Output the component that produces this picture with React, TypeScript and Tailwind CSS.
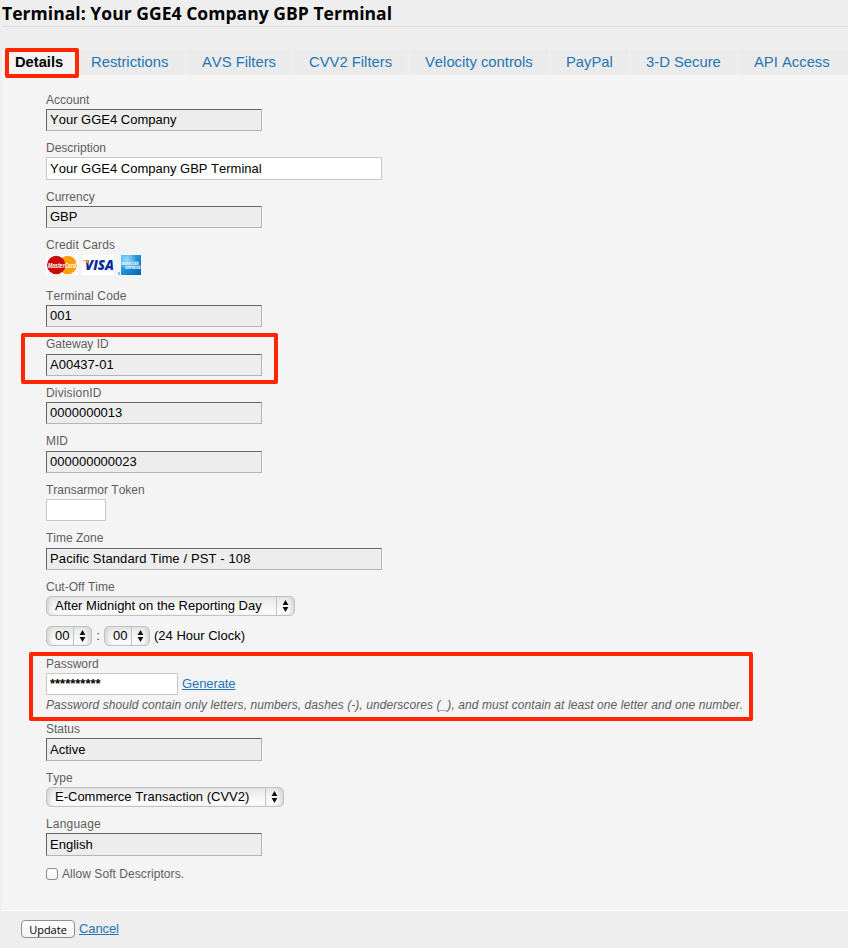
import type { ReactNode } from 'react';

const tabs = [
  { label: 'Restrictions', box: 'w-[104px] pl-[11px]' },
  { label: 'AVS Filters', box: 'w-[104px] pl-[15px]' },
  { label: 'CVV2 Filters', box: 'w-[113px] pl-[15px]' },
  { label: 'Velocity controls', box: 'w-[138px] pl-[15px]' },
  { label: 'PayPal', box: 'w-[77px] pl-[15px]' },
  { label: '3-D Secure', box: 'w-[105px] pl-[15px]' },
  { label: 'API Access', box: 'w-[109px] pl-[15px]' },
];

function Highlight({ className }: { className: string }) {
  return (
    <div
      className={`pointer-events-none absolute rounded-[2px] border-4 border-[#ff2600] ${className}`}
    />
  );
}

function Field({ label, box, gap = 'pb-px', children }: { label: string; box: string; gap?: string; children?: ReactNode }) {
  return (
    <div className={`relative ${box}`}>
      <div className={`text-[12px] leading-4 text-[#5e5e5e] ${gap}`}>{label}</div>
      {children}
    </div>
  );
}

function ReadOnly({ value, box = 'h-[22px] w-[216px]' }: { value: string; box?: string }) {
  return (
    <div
      className={`flex items-center border border-t-[#666] border-r-[#b5b5b5] border-b-[#b5b5b5] border-l-[#666] bg-[#ededed] pl-[3px] ${box}`}
    >
      {value}
    </div>
  );
}

function Input({ value, box }: { value: string; box: string }) {
  return <div className={`flex items-center border border-[#c8c8c8] bg-white pl-[3px] ${box}`}>{value}</div>;
}

function Select({ value, box }: { value: string; box: string }) {
  return (
    <div
      className={`flex h-5 rounded-[5px] border border-[#c3c3c3] bg-linear-to-b from-[#e6e6e6] via-[#f4f4f4] to-white shadow-[inset_4px_0_4px_-2px_#cfcfcf,inset_-4px_0_4px_-2px_#cfcfcf] ${box}`}
    >
      <div className="flex flex-1 items-center pl-2 leading-[18px]">{value}</div>
      <div className="flex w-[18px] items-center justify-center border-l border-[#c3c3c3]">
        <svg width="7" height="12" viewBox="0 0 7 12">
          <path d="M3.5 0 6.4 5H.6zM3.5 12 6.4 7H.6z" fill="#111" />
        </svg>
      </div>
    </div>
  );
}

function Cards() {
  return (
    <div className="flex gap-1">
      <svg className="overflow-visible" width="32" height="20" viewBox="0 0 32 20">
        <path fill="#fff" d="M0 0h32v20H0z" />
        <circle cx="21.7" cy="10" r="9.200" fill="#ff9d0a" />
        <circle cx="10.200" cy="10" r="9.200" fill="#cc0a05" />
        <text x="2" y="12.6" textLength="28" lengthAdjust="spacingAndGlyphs" fill="#fff" fontFamily="Liberation Sans, sans-serif" fontSize="6.8" fontWeight="700" fontStyle="italic">
          MasterCard
        </text>
      </svg>
      <svg className="overflow-visible" width="32" height="20" viewBox="0 0 32 20">
        <path fill="#fff" d="M0 0h32v20H0z" />
        <text x="3" y="15" textLength="29" lengthAdjust="spacingAndGlyphs" fill="#0b2aa0" fontFamily="Open Sans, sans-serif" fontSize="14" fontWeight="800" fontStyle="italic">
          VISA
        </text>
        <path d="M.8 5h4.700l1.800 5.500C6 8 4 6.300 .8 5.500z" fill="#f7a61b" />
      </svg>
      <svg className="overflow-visible" width="23" height="20" viewBox="0 0 23 20">
        <defs>
          <linearGradient id="amex" x1="0" y1="0" x2="1" y2="1">
            <stop offset="0" stopColor="#3fb0ea" />
            <stop offset=".45" stopColor="#2394d6" />
            <stop offset="1" stopColor="#0062b4" />
          </linearGradient>
          <radialGradient id="shine" cx=".3" cy=".25" r=".5">
            <stop offset="0" stopColor="#9adcfb" />
            <stop offset="1" stopColor="#9adcfb" stopOpacity="0" />
          </radialGradient>
        </defs>
        <path fill="url(#amex)" d="M3 0h20v20H3z" />
        <path fill="url(#shine)" d="M3 0h20v20H3z" />
        <path fill="#7fc4ee" d="M0 17h2v3H0z" />
        <path fill="#8ccaf0" opacity=".55" d="M3 6h18v4H3zM7 10h16v4H7z" />
        <g fill="#fff" fillOpacity=".85" fontFamily="Liberation Sans, sans-serif" fontSize="4.300" fontWeight="700">
          <text x="3.500" y="9.700" textLength="17" lengthAdjust="spacingAndGlyphs">AMERICAN</text>
          <text x="7.500" y="13.500" textLength="14.500" lengthAdjust="spacingAndGlyphs">EXPRESS</text>
        </g>
      </svg>
    </div>
  );
}

export default function App() {
  return (
    <div className="flex h-[948px] w-[848px] flex-col bg-[#eee] pl-[2px] font-['Liberation_Sans',Arial,sans-serif] text-[13px] text-black [font-kerning:none]">
      <h1 className="h-[27px] shrink-0 border-b border-[#dcdcdc] font-['Open_Sans','Noto_Sans',sans-serif] text-[17.5px] leading-[26px] font-bold tracking-[0.04px] whitespace-nowrap [font-kerning:normal]">
        Terminal: Your GGE4 Company GBP Terminal
      </h1>

      <nav className="mt-[23px] flex h-[25px] shrink-0 gap-[3px] text-[14.8px] leading-6 whitespace-nowrap text-[#2376b5]">
        <div className="relative w-[75px] bg-[#f4f4f4] pl-[13px] text-[14.7px] font-bold text-black">
          Details
          <Highlight className="-top-[2px] left-[3px] h-[30px] w-[74px]" />
        </div>
        {tabs.map((t) => (
          <div key={t.label} className={`h-6 shrink-0 bg-[#ebebeb] ${t.box}`}>
            {t.label}
          </div>
        ))}
      </nav>

      <main className="flex h-[836px] shrink-0 flex-col border-b border-white bg-[#f4f4f4] pt-[17px] pl-[44px]">
        <Field label="Account" box="h-[48px]">
          <ReadOnly value="Your GGE4 Company" />
        </Field>
        <Field label="Description" box="h-[49px]">
          <Input value="Your GGE4 Company GBP Terminal" box="h-[23px] w-[336px]" />
        </Field>
        <Field label="Currency" box="h-[48px]">
          <ReadOnly value="GBP" />
        </Field>
        <Field label="Credit Cards" box="h-[51px]" gap="pb-[2px] tracking-[0.15px]">
          <Cards />
        </Field>
        <Field label="Terminal Code" box="h-[48px]" gap="pb-px tracking-[0.15px]">
          <ReadOnly value="001" />
        </Field>
        <Field label="Gateway ID" box="h-[49px]" gap="pb-[2px]">
          <ReadOnly value="A00437-01" />
          <Highlight className="-top-[3px] -left-[25px] h-[51px] w-[257px]" />
        </Field>
        <Field label="DivisionID" box="h-[48px]" gap="pb-px tracking-[0.15px]">
          <ReadOnly value="0000000013" />
        </Field>
        <Field label="MID" box="h-[49px]" gap="pb-[2px]">
          <ReadOnly value="000000000023" />
        </Field>
        <Field label="Transarmor Token" box="h-[48px]">
          <Input value="" box="h-[22px] w-[60px]" />
        </Field>
        <Field label="Time Zone" box="h-[49px]" gap="pb-[2px]">
          <ReadOnly value="Pacific Standard Time / PST - 108" box="h-[22px] w-[336px] tracking-[0.12px]" />
        </Field>
        <Field label="Cut-Off Time" box="h-[77px]">
          <Select value="After Midnight on the Reporting Day" box="w-[249px]" />
          <div className="mt-[10px] flex items-center">
            <Select value="00" box="w-[46px]" />
            <span className="w-3 text-center text-[#444]">:</span>
            <Select value="00" box="w-[46px]" />
            <span className="pl-1">(24 Hour Clock)</span>
          </div>
        </Field>
        <Field label="Password" box="h-[65px]">
          <div className="flex items-center">
            <Input value="**********" box="h-[22px] w-[132px] font-bold" />
            <a className="pl-1 tracking-[-0.1px] text-[#2376b5] underline">Generate</a>
          </div>
          <p className="pt-[2px] text-[12px] leading-4 tracking-[0.08px] whitespace-nowrap text-[#5e5e5e] italic">
            Password should contain only letters, numbers, dashes (-), underscores (_), and must contain at least one letter and one number.
          </p>
          <Highlight className="-top-[4px] -left-[17px] h-[69px] w-[724px]" />
        </Field>
        <Field label="Status" box="h-[49px]">
          <ReadOnly value="Active" box="h-[23px] w-[216px]" />
        </Field>
        <Field label="Type" box="h-[46px]">
          <Select value="E-Commerce Transaction (CVV2)" box="w-[238px]" />
        </Field>
        <Field label="Language" box="h-[50px]" gap="pb-px tracking-[0.2px]">
          <ReadOnly value="English" box="h-[23px] w-[216px]" />
        </Field>
        <label className="flex h-4 items-center gap-1 text-[12px] tracking-[0.06px] text-[#5e5e5e]">
          <span className="size-3 rounded-[3px] border border-[#8c8c8c] bg-linear-to-b from-white to-[#f3f3f3]" />
          Allow Soft Descriptors.
        </label>
      </main>

      <footer className="flex items-start gap-1 pt-[9px] pl-[19px]">
        <button className="h-[18px] w-[54px] rounded-[4px] border border-[#8f8f8f] bg-linear-to-b from-white to-[#f2f2f2] font-['Open_Sans','Noto_Sans',sans-serif] text-[11px] leading-[17px] font-medium">
          Update
        </button>
        <a className="leading-[18px] tracking-[-0.1px] text-[#2376b5] underline">Cancel</a>
      </footer>
    </div>
  );
}
